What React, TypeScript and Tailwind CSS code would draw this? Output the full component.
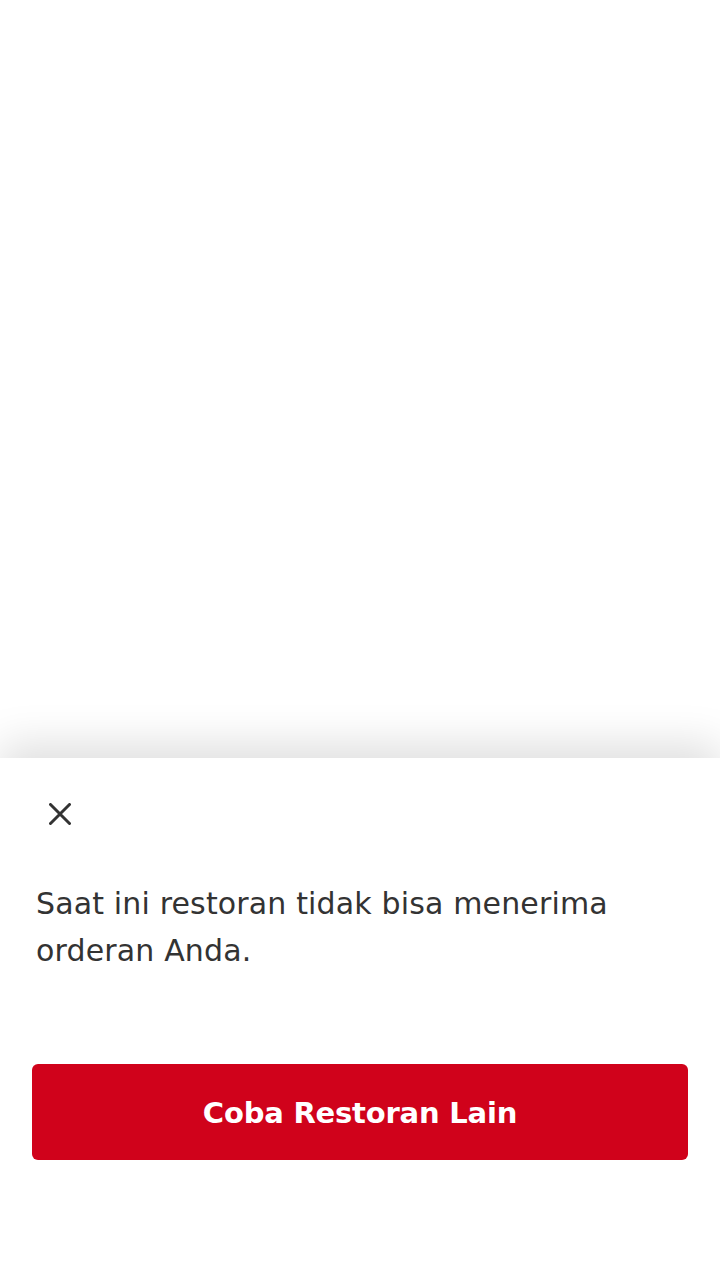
import React from "react";

export default function App() {
  return (
    <div className="w-[720px] h-[1280px] bg-white flex flex-col" style={{ fontFamily: '"DejaVu Sans", "Noto Sans", sans-serif' }}>
      <div className="flex-1" />
      <div className="h-[522px] bg-white shadow-[0_-14px_40px_rgba(0,0,0,0.13)] flex flex-col">
        <div className="pt-[45px] pl-[49px]">
          <svg width="22" height="22" viewBox="0 0 22 22" fill="none" stroke="#333333" strokeWidth="3" strokeLinecap="round">
            <path d="M1.5 1.5L20.5 20.5M20.5 1.5L1.5 20.5" />
          </svg>
        </div>
        <p className="mt-[55px] px-[36px] text-[30px] leading-[47px] tracking-[0.15px] text-[#333333]">
          Saat ini restoran tidak bisa menerima orderan Anda.
        </p>
        <div className="px-[32px] mt-[90px]">
          <button className="w-full h-[96px] rounded-[6px] bg-[#d0021b] text-white text-[29px] font-semibold tracking-[-0.2px] pt-[3px]">
            Coba Restoran Lain
          </button>
        </div>
      </div>
    </div>
  );
}
